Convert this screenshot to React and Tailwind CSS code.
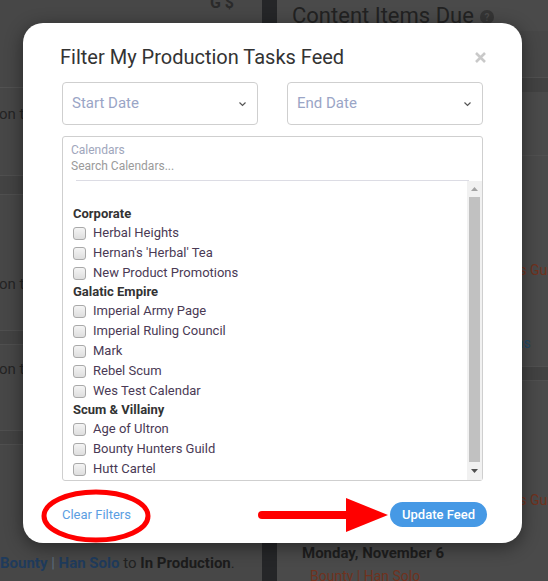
const groups = [
  { name: "Corporate", items: ["Herbal Heights", "Hernan's 'Herbal' Tea", "New Product Promotions"] },
  {
    name: "Galatic Empire",
    items: ["Imperial Army Page", "Imperial Ruling Council", "Mark", "Rebel Scum", "Wes Test Calendar"],
  },
  { name: "Scum & Villainy", items: ["Age of Ultron", "Bounty Hunters Guild", "Hutt Cartel"] },
];

function Chevron() {
  return (
    <svg width="9" height="6" viewBox="0 0 9 6" fill="none">
      <path d="M1.5 1.5l3 3 3-3" stroke="#555" strokeWidth="1.2" />
    </svg>
  );
}

function DateSelect({ label }) {
  return (
    <div className="flex h-[43px] w-[196px] items-center justify-between rounded-[4px] border border-[#cfcfcf] pl-[9px] pr-[10px]">
      <span className="text-[15px] text-[#9aa5c6]">{label}</span>
      <Chevron />
    </div>
  );
}

function Checkbox() {
  return <span className="h-[13px] w-[13px] shrink-0 rounded-[3px] border border-[#a9a9a9] bg-gradient-to-b from-[#f4f4f4] to-[#dedede]" />;
}

function Scrollbar() {
  return (
    <div className="flex w-[15px] flex-col items-center bg-[#f1f1f1]">
      <div className="flex h-[16px] items-center justify-center">
        <svg width="7" height="4" viewBox="0 0 7 4">
          <path d="M0 4L3.5 0L7 4z" fill="#a3a3a3" />
        </svg>
      </div>
      <div className="w-[11px] flex-1 bg-[#c1c1c1]" />
      <div className="flex h-[18px] items-center justify-center">
        <svg width="7" height="4" viewBox="0 0 7 4">
          <path d="M0 0L3.5 4L7 0z" fill="#505050" />
        </svg>
      </div>
    </div>
  );
}

function Background() {
  return (
    <div className="flex h-full w-full text-[15px]">
      {/* left feed column */}
      <div className="flex w-[262px] shrink-0 flex-col overflow-hidden bg-[#474747]">
        <div className="relative h-[88px] shrink-0 border-b border-[#525252]">
          <span className="absolute right-[28px] top-[-9px] text-[16px] font-bold text-[#2a2a2a]">G $</span>
        </div>
        <div className="h-[87px] shrink-0 pt-[15px] text-[#242424]">
          <span className="ml-[-1px]">on the calendar</span>
        </div>
        <div className="h-[20px] shrink-0 border-y border-[#4f4f4f] bg-[#434343]" />
        <div className="h-[135px] shrink-0 pt-[78px] text-[#242424]">
          <span className="ml-[-1px]">on the calendar</span>
        </div>
        <div className="h-[15px] shrink-0 border-y border-[#4f4f4f] bg-[#434343]" />
        <div className="h-[85px] shrink-0 pt-[13px] text-[#242424]">
          <span className="ml-[-1px]">on the calendar</span>
        </div>
        <div className="h-[15px] shrink-0 border-y border-[#4f4f4f] bg-[#434343]" />
        <div className="min-h-0 flex-1 pt-[107px] text-[#222]">
          <span className="whitespace-nowrap">
            <span className="font-bold text-[#1f3b5c]">Bounty</span>
            <span className="text-[#5c6b7c]"> | </span>
            <span className="font-bold text-[#1f3b5c]">Han Solo</span> to <span className="font-bold text-[#1c1c1c]">In Production</span>.
          </span>
        </div>
      </div>

      {/* divider stripe */}
      <div className="w-[15px] shrink-0 bg-[#252628]" />

      {/* right column */}
      <div className="flex min-w-0 flex-1 flex-col overflow-hidden bg-[#444]">
        <div className="flex h-[31px] shrink-0 items-center gap-[6px] bg-[#4a4a4a] pl-[15px]">
          <span className="whitespace-nowrap text-[22px] leading-none text-[#222]">Content Items Due</span>
          <span className="mt-[3px] flex h-[14px] w-[14px] shrink-0 items-center justify-center rounded-full bg-[#353535] text-[10px] font-bold text-[#4a4a4a]">?</span>
        </div>
        <div className="h-[47px] shrink-0 border-b border-[#505050] bg-[#474747]" />
        <div className="h-[14px] shrink-0 bg-[#424242]" />
        <div className="h-[64px] shrink-0 border-b border-[#505050] bg-[#4a4a4a]" />
        <div className="h-[210px] shrink-0 bg-[#4a4a4a] pl-[21px] text-[14px] leading-[20px]">
          <div className="pt-[104px] whitespace-nowrap text-[#70321e]">Imperial Army Page | Bounty Hunters Guild</div>
          <div className="pl-[142px] pt-[53px] whitespace-nowrap text-[#1f4b6a]">Show all items</div>
        </div>
        <div className="h-[15px] shrink-0 border-y border-[#505050] bg-[#424242]" />
        <div className="min-h-0 flex-1 overflow-hidden bg-[#4a4a4a] text-[14px] leading-[20px]">
          <div className="pl-[21px] pt-[109px] whitespace-nowrap text-[#70321e]">Imperial Army Page | Bounty Hunters Guild</div>
          <div className="pl-[25px] pt-[33px] text-[15px] font-bold whitespace-nowrap text-[#1e1e1e]">Monday, November 6</div>
          <div className="pl-[33px] pt-[3px] whitespace-nowrap text-[#70321e]">Bounty | Han Solo</div>
        </div>
      </div>
    </div>
  );
}

export default function App() {
  return (
    <div className="relative h-[581px] w-[548px] overflow-hidden font-['Roboto',sans-serif]">
      <Background />

      {/* modal */}
      <div className="absolute left-[23px] top-[23px] h-[520px] w-[499px] rounded-[20px] bg-white shadow-[0_4px_18px_rgba(0,0,0,0.45)]">
        <div className="flex items-center justify-between pl-[37px] pr-[36px] pt-[22px]">
          <h2 className="text-[20px] leading-[24px] text-[#333]">Filter My Production Tasks Feed</h2>
          <svg width="11" height="11" viewBox="0 0 11 11">
            <path d="M1 1l9 9M10 1l-9 9" stroke="#c9c9c9" strokeWidth="2.6" />
          </svg>
        </div>

        <div className="px-[39px]">
          <div className="mt-[13px] flex justify-between">
            <DateSelect label="Start Date" />
            <DateSelect label="End Date" />
          </div>

          <div className="mt-[11px] flex h-[345px] flex-col rounded-[3px] border border-[#cfcfcf]">
            <div className="px-[8px] pt-[5px] text-[12px] leading-[16px]">
              <div className="text-[#a0a6bc]">Calendars</div>
              <div className="text-[#9a9a9a]">Search Calendars...</div>
            </div>
            <div className="mx-[13px] mt-[6px] border-b border-[#dcdce4]" />
            <div className="flex flex-1 overflow-hidden">
              <div className="flex-1 pl-[10px] pt-[24px] text-[13px]">
                {groups.map((g) => (
                  <div key={g.name}>
                    <div className="flex h-[18px] items-center font-bold text-[#333]">{g.name}</div>
                    {g.items.map((it) => (
                      <div key={it} className="flex h-[20px] items-center gap-[7px]">
                        <Checkbox />
                        <span className="text-[#4a3a55]">{it}</span>
                      </div>
                    ))}
                  </div>
                ))}
              </div>
              <Scrollbar />
            </div>
          </div>
        </div>

        <div className="mt-[21px] flex items-center justify-between pl-[39px] pr-[35px]">
          <span className="text-[13px] text-[#5b9ee2]">Clear Filters</span>
          <button className="h-[25px] w-[97px] rounded-full bg-[#4699e5] text-[13px] font-medium text-white">
            Update Feed
          </button>
        </div>
      </div>

      {/* red annotations */}
      <svg className="pointer-events-none absolute left-0 top-0" width="548" height="581" viewBox="0 0 548 581">
        <ellipse cx="96" cy="516" rx="52" ry="24" fill="none" stroke="#ff0000" strokeWidth="5" />
        <path d="M262 515H350" stroke="#ff0000" strokeWidth="8" strokeLinecap="round" />
        <path d="M346 498L388 515L346 532z" fill="#ff0000" />
      </svg>
    </div>
  );
}
